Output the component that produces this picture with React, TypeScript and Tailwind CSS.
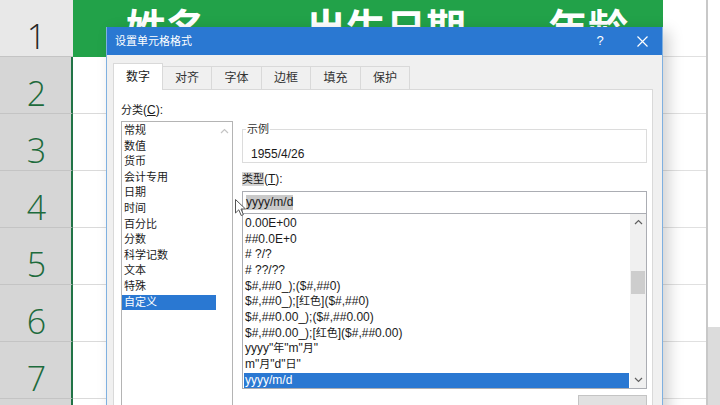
import React from "react";

const FONT = "font-['Liberation_Sans','Noto_Sans_CJK_SC',sans-serif]";

// CJK glyphs in the dialog run a bit smaller than the latin text
const cjk = (text: string) =>
  text.split(/([\u4e00-\u9fff]+)/).map((part, i) =>
    /[\u4e00-\u9fff]/.test(part) ? (
      <span key={i} className="text-[11px]">
        {part}
      </span>
    ) : (
      part
    )
  );

const Chevron = ({ down, className }: { down?: boolean; className?: string }) => (
  <svg width="9" height="6" viewBox="0 0 9 6" className={className}>
    <polyline
      points={down ? "1,1 4.5,4.5 8,1" : "1,5 4.5,1.5 8,5"}
      fill="none"
      stroke="currentColor"
      strokeWidth="1.2"
    />
  </svg>
);

const rows = [1, 2, 3, 4, 5, 6, 7, 8];

const categories = [
  "常规",
  "数值",
  "货币",
  "会计专用",
  "日期",
  "时间",
  "百分比",
  "分数",
  "科学记数",
  "文本",
  "特殊",
  "自定义",
];

const formats = [
  "0.00E+00",
  "##0.0E+0",
  "# ?/?",
  "# ??/??",
  "$#,##0_);($#,##0)",
  "$#,##0_);[红色]($#,##0)",
  "$#,##0.00_);($#,##0.00)",
  "$#,##0.00_);[红色]($#,##0.00)",
  'yyyy"年"m"月"',
  'm"月"d"日"',
  "yyyy/m/d",
];

const tabs = [
  { label: "数字", w: "w-[50px]" },
  { label: "对齐", w: "w-[49px]" },
  { label: "字体", w: "w-[50px]" },
  { label: "边框", w: "w-[49px]" },
  { label: "填充", w: "w-[50px]" },
  { label: "保护", w: "w-[49px]" },
];

const Sheet = () => {
  return (
    <div className="flex h-[405px]">
      <div className="w-[73px] shrink-0 font-['Open_Sans',sans-serif]">
        {rows.map((n) => (
          <div
            key={n}
            className={
              n === 1
                ? "h-[57px] flex justify-center items-center pt-[15px] border-b border-[#c4c4c4] bg-[#e8e8e8] text-[#262626] text-[34px] leading-[34px] font-light"
                : "h-[57px] flex justify-center items-center pt-[15px] pl-[2px] border-b border-[#c4c4c4] border-r-2 border-r-[#217346] bg-[#d6d6d6] text-[#1d6b3c] text-[34px] leading-[34px] font-light"
            }
          >
            {n < 8 ? n : null}
          </div>
        ))}
      </div>

      <div className="w-[590px] shrink-0">
        <div className="h-[57px] flex bg-[#22a249] text-white text-[40px] leading-[40px] font-bold font-['Noto_Sans_CJK_SC',sans-serif]">
          <div className="w-[186px] flex justify-center pt-[6px]">姓名</div>
          <div className="w-[254px] flex justify-center pt-[6px]">出生日期</div>
          <div className="w-[150px] flex justify-center pt-[6px]">年龄</div>
        </div>
        {rows.slice(1).map((n) => (
          <div key={n} className="h-[57px] border-b border-[#dadada]" />
        ))}
      </div>

      <div className="w-[45px] shrink-0 border-r-2 border-[#c8c8c8]">
        {rows.map((n) => (
          <div key={n} className="h-[57px] border-b border-[#e0e0e0]" />
        ))}
      </div>

      <div className="flex-1 flex flex-col">
        <div className="h-[327px] bg-white" />
        <div className="flex-1 bg-[#dcdcdc]" />
      </div>
    </div>
  );
};

const FormatDialog = () => {
  return (
    <div
      className={`absolute left-[106px] top-[27px] w-[557px] h-[390px] border-x border-[#7fb0e0] bg-[#f0f0f0] shadow-[6px_4px_14px_rgba(0,0,0,0.18)] text-[#1a1a1a] ${FONT}`}
    >
      <div className="h-[28px] flex items-center bg-[#2a78d2] text-white">
        <span className="pl-[8px] text-[11px]">设置单元格格式</span>
        <span className="ml-auto w-[36px] mr-[4px] text-center text-[13px]">?</span>
        <span className="w-[40px] flex justify-center">
          <svg width="11" height="11" viewBox="0 0 11 11">
            <path d="M0.5 0.5 L10.5 10.5 M10.5 0.5 L0.5 10.5" stroke="white" strokeWidth="1.2" />
          </svg>
        </span>
      </div>

      <div className="pt-[8px] pl-[6px]">
        <div className="flex items-end h-[26px]">
          {tabs.map((t, i) =>
            i === 0 ? (
              <div
                key={t.label}
                className={`${t.w} h-[27px] -mb-px relative z-10 flex items-center justify-center pb-[1px] bg-white border border-b-0 border-[#d9d9d9] text-[12px]`}
              >
                {t.label}
              </div>
            ) : (
              <div
                key={t.label}
                className={`${t.w} h-[23px] flex items-center justify-center border-t border-r border-[#d9d9d9] bg-[#f0f0f0] text-[12px] text-[#333]`}
              >
                {t.label}
              </div>
            )
          )}
        </div>

        <div className="w-[540px] h-[330px] border border-[#d9d9d9] bg-white pt-[10px] px-[7px] flex gap-[9px]">
          <div className="w-[112px] shrink-0">
            <div className="h-[21px] leading-[21px] text-[12px]">
              {cjk("分类(")}
              <span className="underline">C</span>):
            </div>
            <div className="h-[300px] border border-[#b4b4b4] flex">
              <div className="w-[94px] pt-[1px]">
                {categories.map((c) => (
                  <div
                    key={c}
                    className={
                      c === "自定义"
                        ? "h-[15.6px] leading-[15.6px] pl-[2px] text-[11px] bg-[#2a78d2] text-white"
                        : "h-[15.6px] leading-[15.6px] pl-[2px] text-[11px]"
                    }
                  >
                    {c}
                  </div>
                ))}
              </div>
              <div className="flex-1 flex justify-center pt-[6px] text-[#c4c4c4]">
                <Chevron />
              </div>
            </div>
          </div>

          <div className="w-[405px] shrink-0 flex flex-col">
            <fieldset className="mt-[22px] h-[44px] border border-[#dcdcdc]">
              <legend className="ml-[3px] px-[1px] text-[12px] leading-[14px] text-[#333]">
                {cjk("示例")}
              </legend>
              <div className="mt-[10px] pl-[8px] text-[12px] leading-[16px]">1955/4/26</div>
            </fieldset>

            <div className="mt-[9px] h-[14px] leading-[14px] text-[12px]">
              <span className="bg-[#d4d4d4]">{cjk("类型")}</span>
              {cjk("(")}
              <span className="underline">T</span>):
            </div>

            <div className="mt-[5px] h-[24px] border border-[#abadb3] flex items-center pl-[3px] text-[12px]">
              <span className="leading-[15px] bg-[#c9c9c9]">yyyy/m/d</span>
            </div>

            <div className="h-[177px] border-x border-b border-[#abadb3] flex">
              <div className="flex-1 pt-[2px] px-[1px] text-[12px]">
                {formats.map((f) => (
                  <div
                    key={f}
                    className={
                      f === "yyyy/m/d"
                        ? "h-[15.7px] leading-[15.7px] pl-[1px] bg-[#2a78d2] text-white"
                        : "h-[15.7px] leading-[15.7px] pl-[1px]"
                    }
                  >
                    {cjk(f)}
                  </div>
                ))}
              </div>
              <div className="w-[16px] flex flex-col bg-[#f0f0f0] text-[#606060]">
                <div className="h-[17px] flex items-center justify-center">
                  <Chevron />
                </div>
                <div className="h-[40px]" />
                <div className="h-[23px] mx-[1px] bg-[#cdcdcd]" />
                <div className="flex-1" />
                <div className="h-[17px] flex items-center justify-center">
                  <Chevron down />
                </div>
              </div>
            </div>

            <div className="mt-[6px] self-end w-[69px] h-[24px] bg-[#e1e1e1] border border-[#c4c4c4]" />
          </div>
        </div>
      </div>
    </div>
  );
};

const Cursor = () => (
  <svg
    width="12"
    height="18"
    viewBox="0 0 12 18"
    className="absolute left-[235px] top-[199px] z-20"
  >
    <path
      d="M0.5 0.5 L0.5 14 L3.8 10.8 L6.2 16.5 L8.4 15.6 L6 10 L10.5 10 Z"
      fill="white"
      stroke="#555"
      strokeWidth="1"
      strokeLinejoin="round"
    />
  </svg>
);

export default function App() {
  return (
    <div className="relative w-[720px] h-[405px] overflow-hidden bg-white">
      <Sheet />
      <FormatDialog />
      <Cursor />
    </div>
  );
}
